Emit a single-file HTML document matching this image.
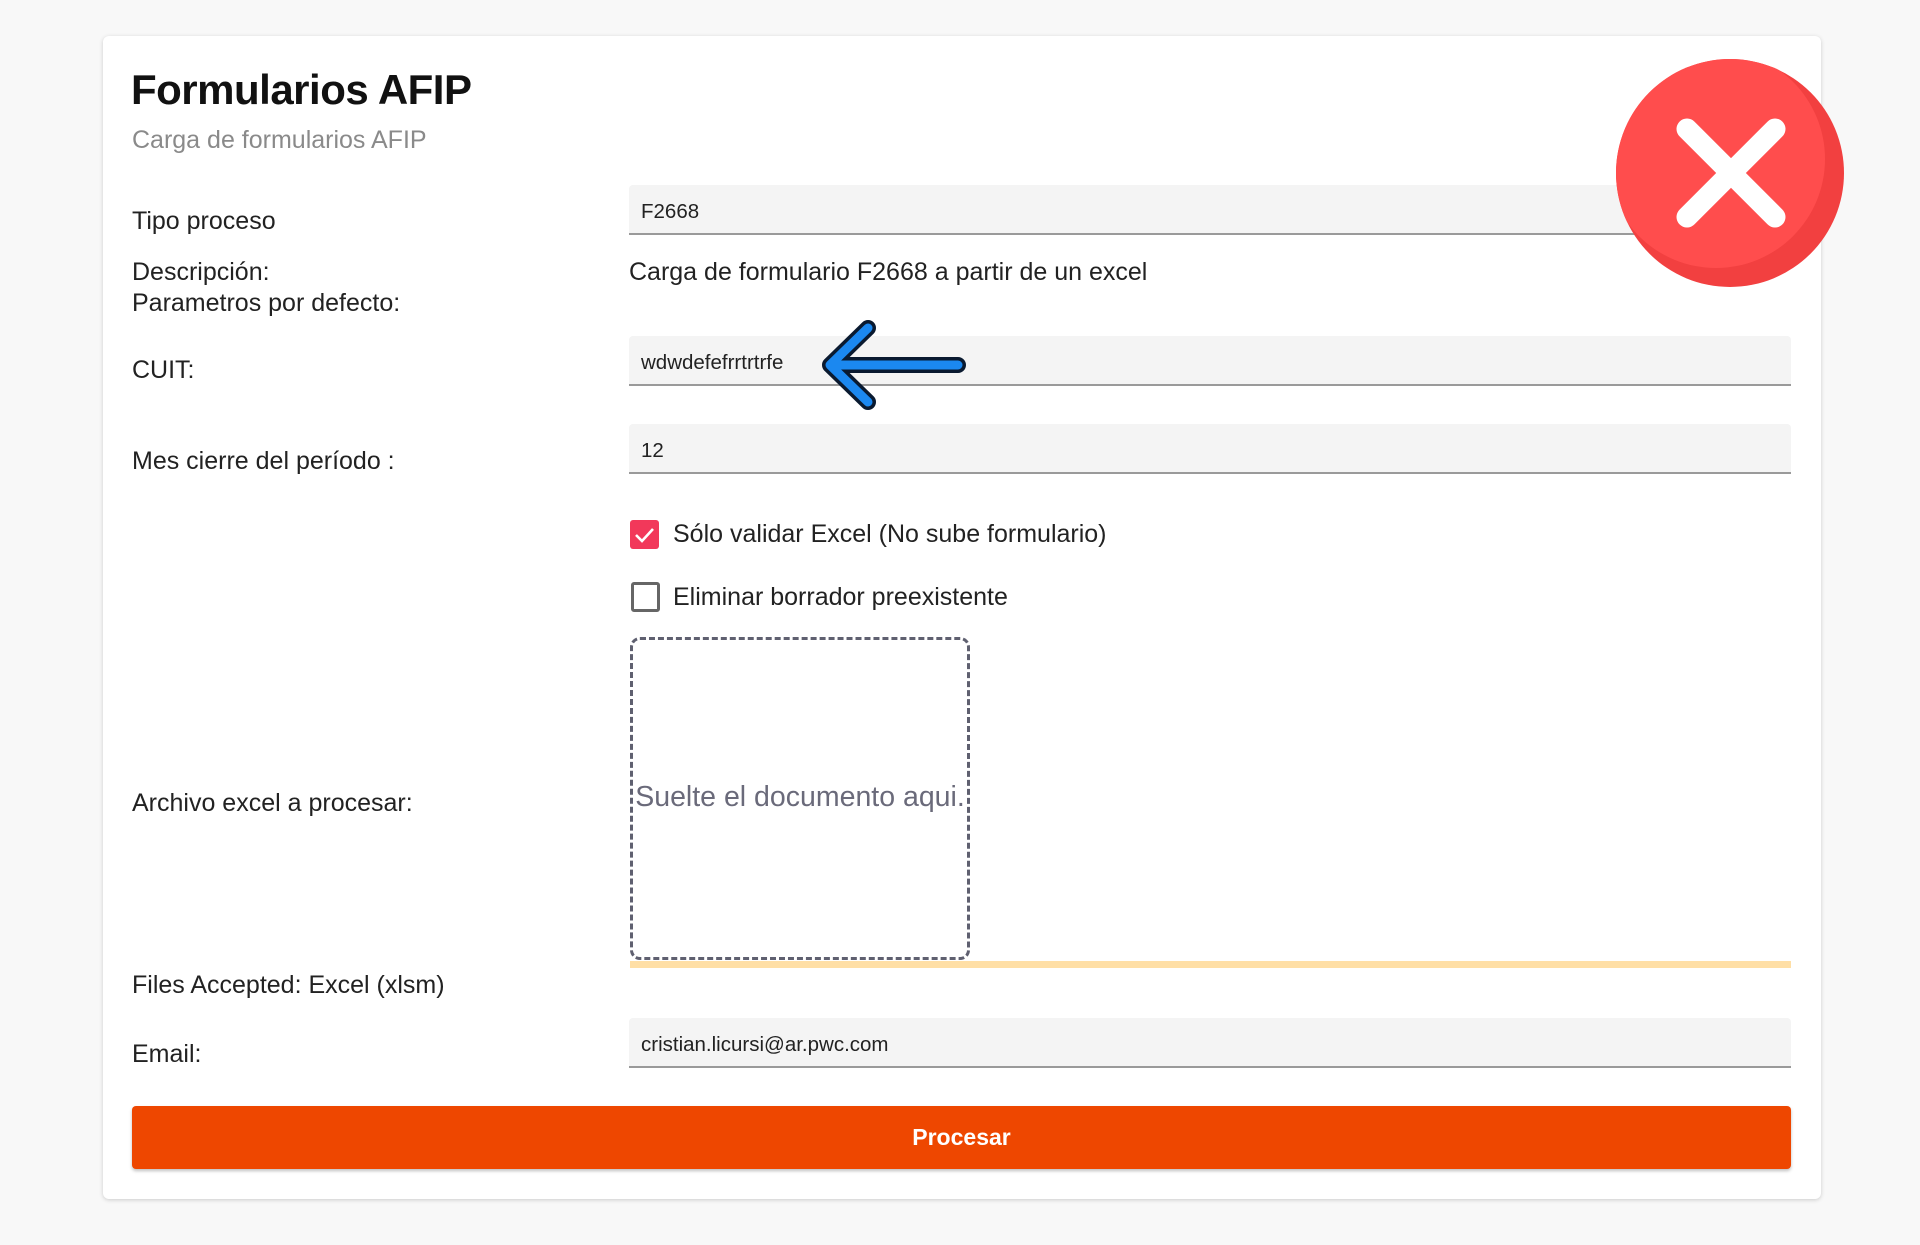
<!DOCTYPE html>
<html><head><meta charset="utf-8">
<style>
html,body{margin:0;padding:0;}
body{width:1920px;height:1245px;background:#f8f8f8;position:relative;overflow:hidden;font-family:"Liberation Sans",sans-serif;color:#222;}
.card{position:absolute;left:103px;top:36px;width:1718px;height:1163px;background:#fff;border-radius:6px;box-shadow:0 1px 4px rgba(0,0,0,0.18);}
.a{position:absolute;white-space:nowrap;}
.lbl{font-size:25px;color:#222;}
.inp{position:absolute;left:629px;width:1162px;height:50px;background:#f4f4f4;border-bottom:2px solid #9a9a9a;border-radius:4px 4px 0 0;box-sizing:border-box;}
.inp span{position:absolute;left:12px;bottom:9px;font-size:20.5px;color:#222;}
</style></head><body>
<div class="card"></div>
<div class="a" style="left:131px;top:66px;font-size:42px;font-weight:600;color:#111;letter-spacing:-0.5px">Formularios AFIP</div>
<div class="a" style="left:132px;top:126px;font-size:25px;color:#8a8a8a">Carga de formularios AFIP</div>

<div class="a lbl" style="left:132px;top:207px">Tipo proceso</div>
<div class="inp" style="top:185px"><span>F2668</span></div>

<div class="a lbl" style="left:132px;top:258px">Descripción:</div>
<div class="a lbl" style="left:132px;top:289px">Parametros por defecto:</div>
<div class="a lbl" style="left:629px;top:258px">Carga de formulario F2668 a partir de un excel</div>

<div class="a lbl" style="left:132px;top:356px">CUIT:</div>
<div class="inp" style="top:336px"><span>wdwdefefrrtrtrfe</span></div>

<div class="a lbl" style="left:132px;top:447px">Mes cierre del período :</div>
<div class="inp" style="top:424px"><span>12</span></div>

<div class="a" style="left:630px;top:520px;width:29px;height:29px;background:#f2385a;border-radius:3px"></div>
<svg class="a" style="left:630px;top:520px" width="29" height="29"><path d="M6 15 L12 21 L23 9" fill="none" stroke="#fff" stroke-width="2.6"/></svg>
<div class="a lbl" style="left:673px;top:520px">Sólo validar Excel (No sube formulario)</div>

<div class="a" style="left:631px;top:582px;width:23px;height:24px;border:3px solid #666;border-radius:3px"></div>
<div class="a lbl" style="left:673px;top:583px">Eliminar borrador preexistente</div>

<div class="a lbl" style="left:132px;top:789px">Archivo excel a procesar:</div>
<div class="a" style="left:630px;top:637px;width:340px;height:323px;box-sizing:border-box;border:3px dashed #5f6070;border-radius:10px"></div>
<div class="a" style="left:630px;top:781px;width:340px;text-align:center;font-size:28.5px;color:#6a6a7a">Suelte el documento aqui.</div>
<div class="a" style="left:630px;top:961px;width:1161px;height:7px;background:#ffdfa6"></div>

<div class="a lbl" style="left:132px;top:971px">Files Accepted: Excel (xlsm)</div>

<div class="a lbl" style="left:132px;top:1040px">Email:</div>
<div class="inp" style="top:1018px"><span>cristian.licursi@ar.pwc.com</span></div>

<div class="a" style="left:132px;top:1106px;width:1659px;height:63px;background:#ee4700;border-radius:4px;box-shadow:0 2px 3px rgba(0,0,0,0.25);color:#fff;font-size:23px;font-weight:bold;text-align:center;line-height:63px">Procesar</div>

<svg class="a" style="left:0;top:0" width="1920" height="1245">
  <defs><clipPath id="cc"><circle cx="1730" cy="173" r="114"/></clipPath></defs>
  <g stroke-linecap="round" stroke-linejoin="round" fill="none">
    <path d="M958 365 L830 365 M868 328 L830 365 L868 402" stroke="#0a1a30" stroke-width="16"/>
    <path d="M958 365 L830 365 M868 328 L830 365 L868 402" stroke="#1b88f0" stroke-width="9"/>
  </g>
  <circle cx="1730" cy="173" r="114" fill="#f24040"/>
  <circle cx="1716" cy="159" r="109" fill="#ff4d4d" clip-path="url(#cc)"/>
  <path d="M1687 129 L1775 217 M1775 129 L1687 217" stroke="#fff" stroke-width="21" stroke-linecap="round"/>
</svg>
</body></html>
